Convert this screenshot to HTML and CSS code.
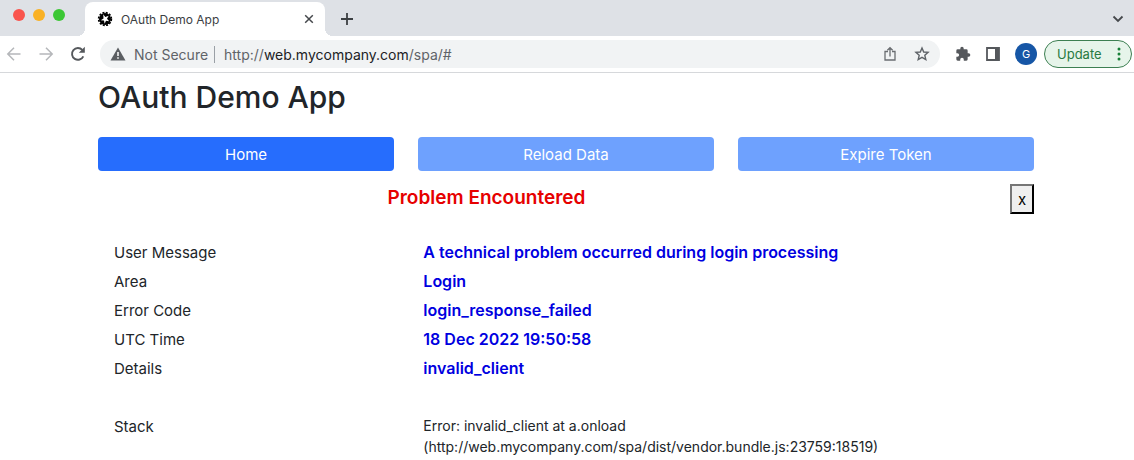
FILE: index.html
```html
<!DOCTYPE html>
<html lang="en">
<head>
<meta charset="utf-8">
<meta name="viewport" content="width=device-width, initial-scale=1">
<title>OAuth Demo App</title>
<link rel="stylesheet" href="styles.css">
</head>
<body>
<header class="browser">
  <div class="tab-strip">
    <div class="window-controls">
      <button class="dot dot-close" aria-label="Close window"></button>
      <button class="dot dot-minimize" aria-label="Minimize window"></button>
      <button class="dot dot-zoom" aria-label="Zoom window"></button>
    </div>
    <div class="tab">
      <svg class="favicon" viewBox="0 0 16 16" aria-hidden="true">
        <circle cx="8" cy="8" r="6" fill="#000"/>
        <circle cx="8" cy="8" r="6.4" fill="none" stroke="#000" stroke-width="1.6" stroke-dasharray="2 1.35"/>
        <path fill="#fff" d="M6.2 3.2 8.3 6l3.4-1.3L10 7.8l2.2 2.4-3.2-.5L7.600 12.800 7 9.500 3.800 9.200 6.500 7.500z"/>
      </svg>
      <span class="tab-title">OAuth Demo App</span>
      <button class="icon-button tab-close" aria-label="Close tab">
        <svg width="10" height="10" viewBox="0 0 10 10" fill="none" stroke="#45484c" stroke-width="1.5"><path d="M1.200 1.200l7.600 7.600M8.800 1.200L1.200 8.800"/></svg>
      </button>
    </div>
    <button class="icon-button new-tab" aria-label="New tab">
      <svg width="12" height="12" viewBox="0 0 12 12" fill="none" stroke="#3c4043" stroke-width="1.8"><path d="M6 0v12M0 6h12"/></svg>
    </button>
    <button class="icon-button tab-search" aria-label="Search tabs">
      <svg width="12" height="12" viewBox="0 0 12 12" fill="none" stroke="#45484c" stroke-width="1.800"><path d="M1.500 3.500 6 8l4.500-4.500"/></svg>
    </button>
  </div>
  <div class="toolbar">
    <nav class="history" aria-label="History">
      <button class="icon-button" aria-label="Back">
        <svg width="16" height="16" viewBox="0 0 16 16" fill="none" stroke="#b5b7ba" stroke-width="1.500"><path d="M14.500 8H2M8 1.800 1.800 8 8 14.200"/></svg>
      </button>
      <button class="icon-button" aria-label="Forward">
        <svg width="16" height="16" viewBox="0 0 16 16" fill="none" stroke="#b5b7ba" stroke-width="1.500"><path d="M1.500 8H14M8 1.800 14.200 8 8 14.200"/></svg>
      </button>
      <button class="icon-button" aria-label="Reload">
        <svg width="16" height="16" viewBox="0 0 16 16"><path fill="none" stroke="#55585c" stroke-width="1.900" d="M13.300 10.300A5.900 5.900 0 1 1 12.300 3.900"/><path fill="#55585c" d="M14.800.8v6H8.800z"/></svg>
      </button>
    </nav>
    <div class="address-bar">
      <svg class="warning" width="16" height="14" viewBox="0 0 16 14" aria-hidden="true"><path fill="#5b5e62" d="M8 .5 15.500 13.500H.5z"/><path stroke="#fff" stroke-width="1.500" d="M8 5v4M8 10.200v1.500"/></svg>
      <span class="security">Not Secure</span>
      <span class="url">http://<span class="url-host">web.mycompany.com</span>/spa/#</span>
      <button class="icon-button" aria-label="Share">
        <svg width="14" height="16" viewBox="0 0 14 16" fill="none" stroke="#6a6d71" stroke-width="1.300"><path d="M5 5.500H2V14h10V5.500H9M7 10.500V2M4.400 4.300 7 1.700l2.600 2.600"/></svg>
      </button>
      <button class="icon-button" aria-label="Bookmark">
        <svg width="16" height="16" viewBox="0 0 16 16" fill="none" stroke="#5f6368" stroke-width="1.400"><path d="m8 2 1.700 4 4.400.4-3.300 2.900 1 4.300L8 11.300l-3.800 2.300 1-4.300-3.300-2.900 4.400-.4z"/></svg>
      </button>
    </div>
    <div class="actions">
      <button class="icon-button" aria-label="Extensions">
        <svg width="16" height="16" viewBox="0 0 24 24"><path fill="#55585c" d="M20.500 11H19V7a2 2 0 0 0-2-2h-4V3.500a2.500 2.500 0 0 0-5 0V5H4a2 2 0 0 0-2 2v3.800h1.500a2.700 2.700 0 0 1 0 5.400H2V20a2 2 0 0 0 2 2h3.800v-1.500a2.700 2.700 0 0 1 5.400 0V22H17a2 2 0 0 0 2-2v-4h1.500a2.500 2.500 0 0 0 0-5z"/></svg>
      </button>
      <button class="icon-button" aria-label="Side panel">
        <svg width="14" height="14" viewBox="0 0 14 14"><path fill="none" stroke="#55585c" stroke-width="1.800" d="M1 1h12v12H1z"/><path fill="#55585c" d="M9 1h4v12H9z"/></svg>
      </button>
      <button class="avatar" aria-label="Profile G">G</button>
    </div>
    <button class="update">Update
      <svg width="4" height="14" viewBox="0 0 4 14" fill="#188038" aria-hidden="true"><circle cx="2" cy="2" r="1.500"/><circle cx="2" cy="7" r="1.500"/><circle cx="2" cy="12" r="1.500"/></svg>
    </button>
  </div>
</header>
<main class="page">
  <h1 class="app-title">OAuth Demo App</h1>
  <div class="button-row">
    <button class="primary">Home</button>
    <button class="primary" disabled>Reload Data</button>
    <button class="primary" disabled>Expire Token</button>
  </div>
  <section class="problem">
    <div class="problem-header">
      <h2 class="problem-title">Problem Encountered</h2>
      <button class="dismiss" aria-label="Dismiss x">x</button>
    </div>
    <dl class="fields">
      <div class="field"><dt>User Message</dt><dd>A technical problem occurred during login processing</dd></div>
      <div class="field"><dt>Area</dt><dd>Login</dd></div>
      <div class="field"><dt>Error Code</dt><dd>login_response_failed</dd></div>
      <div class="field"><dt>UTC Time</dt><dd>18 Dec 2022 19:50:58</dd></div>
      <div class="field"><dt>Details</dt><dd>invalid_client</dd></div>
      <div class="field field-stack"><dt>Stack</dt><dd>Error: invalid_client at a.onload<br>(http://web.mycompany.com/spa/dist/vendor.bundle.js:23759:18519)</dd></div>
    </dl>
  </section>
</main>
</body>
</html>
```
FILE: styles.css
```css
* {
  box-sizing: border-box;
}

body {
  margin: 0;
  background: #fff;
  color: #212529;
  font-family: Inter, "Liberation Sans", sans-serif;
  font-size: 15px;
}

button {
  padding: 0;
  border: 0;
  font-family: inherit;
}

svg {
  display: block;
}

.icon-button {
  flex: none;
  background: none;
}

.browser {
  border-bottom: 1px solid #d6d8db;
}

.tab-strip {
  display: flex;
  align-items: flex-end;
  height: 36px;
  padding-right: 10px;
  background: #dee1e6;
}

.window-controls {
  display: flex;
  gap: 8px;
  padding: 0 20px 15px 13px;
}

.dot {
  width: 12px;
  height: 12px;
  border-radius: 50%;
}

.dot-close {
  background: #f9544d;
}

.dot-minimize {
  background: #f9b125;
}

.dot-zoom {
  background: #3cc735;
}

.tab {
  position: relative;
  display: flex;
  align-items: center;
  flex: 0 1 240px;
  height: 34px;
  padding: 0 11px 0 12px;
  background: #fff;
  border-radius: 8px 8px 0 0;
}

.tab::before,
.tab::after {
  content: "";
  position: absolute;
  bottom: 0;
  width: 8px;
  height: 8px;
}

.tab::before {
  right: 100%;
  background: radial-gradient(circle at 0 0, transparent 8px, #fff 8px);
}

.tab::after {
  left: 100%;
  background: radial-gradient(circle at 100% 0, transparent 8px, #fff 8px);
}

.favicon {
  width: 16px;
  height: 16px;
  margin-right: 8px;
}

.tab-title {
  flex: 1;
  color: #3c4043;
  font-size: 12px;
  white-space: nowrap;
}

.new-tab {
  padding: 0 0 11px 16px;
}

.tab-search {
  margin-left: auto;
  padding-bottom: 11px;
}

.toolbar {
  display: flex;
  align-items: center;
  height: 36px;
  padding: 0 2px 0 6px;
}

.history {
  display: flex;
  gap: 16px;
  padding-right: 14px;
}

.address-bar {
  display: flex;
  align-items: center;
  flex: 1;
  gap: 17px;
  height: 28px;
  padding: 0 10px;
  background: #f1f3f4;
  border-radius: 14px;
  color: #5f6368;
  font-size: 14px;
}

.warning {
  margin-right: -9px;
}

.security {
  margin-right: -8px;
  padding-right: 6px;
  border-right: 1px solid #9aa0a6;
  white-space: nowrap;
}

.url {
  flex: 1;
}

.url-host {
  color: #202124;
}

.actions {
  display: flex;
  align-items: center;
  gap: 15px;
  padding: 0 7px 0 15px;
}

.avatar {
  width: 22px;
  height: 22px;
  border-radius: 50%;
  background: #1656a6;
  color: #fff;
  font-size: 11px;
}

.update {
  display: flex;
  align-items: center;
  justify-content: space-between;
  width: 88px;
  height: 28px;
  padding: 0 10px 0 12px;
  border: 1px solid #3d7f52;
  border-radius: 14px;
  background: #e6f4ea;
  color: #287a42;
  font-size: 13px;
}

.page {
  padding: 4px 100px 0 98px;
}

.app-title {
  margin: 0 0 20px;
  font-size: 30px;
  font-weight: 500;
  line-height: 40px;
}

.button-row {
  display: grid;
  grid-template-columns: repeat(3, 1fr);
  gap: 24px;
}

.primary {
  height: 34px;
  border-radius: 4px;
  background: #266dfd;
  color: #fff;
  font-size: 15px;
}

.primary:disabled {
  background: #6ea1fe;
}

.problem-header {
  display: grid;
  grid-template-columns: 83% 17%;
  align-items: start;
  padding-top: 13px;
}

.problem-title {
  margin: 0;
  color: #e60000;
  font-size: 19px;
  font-weight: 600;
  line-height: 28px;
  text-align: center;
}

.dismiss {
  justify-self: end;
  width: 24px;
  height: 30px;
  border: 2px outset #555;
  border-color: #767676 #171717 #171717 #767676;
  background: #efefef;
  color: #000;
  font-size: 15px;
}

.fields {
  margin: 24px -8px 0 16px;
}

.field {
  display: grid;
  grid-template-columns: 1fr 2fr;
  line-height: 29px;
}

.field dd {
  margin: 0;
  color: #0000e0;
  font-size: 16px;
  font-weight: 600;
}

.field-stack {
  padding-top: 29px;
}

.field-stack dd {
  padding-top: 3px;
  color: #212529;
  font-size: 14px;
  font-weight: 400;
  line-height: 21px;
}
```
